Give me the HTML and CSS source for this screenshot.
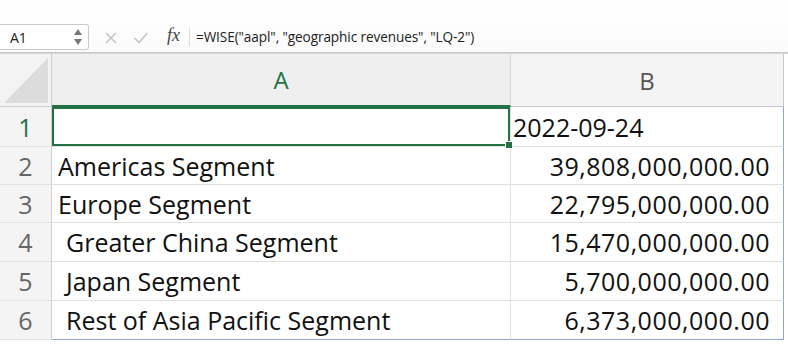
FILE: index.html
```html
<!doctype html>
<html>
	<head>
		<meta charset="utf-8"/>
		<title>Sheet</title>
		<link rel="stylesheet" href="styles.css">
	</head>
	<body>
		<header class="formulaBar">
			<div class="nameBox">
				<span>A1</span>
				<svg class="spin" width="10" height="20" viewBox="0 0 10 20">
					<polygon points="5,2 9,8 1,8" fill="#777"/>
					<polygon points="1,12 9,12 5,18" fill="#777"/>
				</svg>
			</div>
			<svg class="tool" width="14" height="14" viewBox="0 0 14 14">
				<path d="M2 2 L12 12 M12 2 L2 12" stroke="#c4c4c4" stroke-width="1.6" fill="none"/>
			</svg>
			<svg class="tool" width="16" height="14" viewBox="0 0 16 14">
				<path d="M1.5 7 L6 11.5 L14.5 2" stroke="#c4c4c4" stroke-width="1.6" fill="none"/>
			</svg>
			<span class="fx">fx</span>
			<span class="sep"></span>
			<span class="formula">=WISE("aapl", "geographic revenues", "LQ-2")</span>
		</header>
		<div class="rule"></div>

		<main class="sheet">
			<div class="corner">
				<svg width="52" height="53" viewBox="0 0 52 53">
					<polygon points="48,4 48,49 4,49" fill="#dcdcdc"/>
				</svg>
			</div>
			<div class="colHead active">A</div>
			<div class="colHead last">B</div>

			<div class="rowHead active">1</div>
			<div class="cell sel"></div>
			<div class="cell colB">2022-09-24</div>

			<div class="rowHead">2</div>
			<div class="cell">Americas Segment</div>
			<div class="cell colB num">39,808,000,000.00</div>

			<div class="rowHead">3</div>
			<div class="cell">Europe Segment</div>
			<div class="cell colB num">22,795,000,000.00</div>

			<div class="rowHead">4</div>
			<div class="cell indent">Greater China Segment</div>
			<div class="cell colB num">15,470,000,000.00</div>

			<div class="rowHead">5</div>
			<div class="cell indent">Japan Segment</div>
			<div class="cell colB num">5,700,000,000.00</div>

			<div class="rowHead">6</div>
			<div class="cell indent bottom">Rest of Asia Pacific Segment</div>
			<div class="cell colB num bottom">6,373,000,000.00</div>
		</main>
	</body>
</html>
```
FILE: styles.css
```css
html, body {
	width: 788px;
	height: 359px;
	overflow: hidden;
}
body {
	margin: 0;
	background-color: #fff;
	font-family: "Open Sans", "Noto Sans", sans-serif;
}
body * {
	box-sizing: border-box;
}

/* formula bar */
.formulaBar {
	height: 52px;
	padding-top: 24px;
	display: flex;
	align-items: flex-start;
	background: linear-gradient(#fff, #fbfbfb);
}
.nameBox {
	width: 89px;
	height: 26px;
	border: 1px solid #c9c9c9;
	border-left: none;
	border-radius: 0 3px 3px 0;
	background-color: #fff;
	display: flex;
	align-items: center;
	justify-content: space-between;
	padding: 0 5px 0 10px;
	font-size: 14px;
	color: #222;
}
.tool {
	margin-top: 7px;
}
.nameBox + .tool {
	margin-left: 15px;
}
.tool + .tool {
	margin-left: 15px;
}
.fx {
	margin-left: 18px;
	margin-top: 1px;
	font-family: "Liberation Serif", serif;
	font-style: italic;
	font-size: 18px;
	color: #444;
}
.sep {
	width: 1px;
	height: 18px;
	margin: 4px 6px 0 9px;
	background-color: #dedede;
}
.formula {
	margin-top: 3px;
	font-size: 13.6px;
	color: #222;
	letter-spacing: -0.1px;
}
.rule {
	height: 2px;
	border-top: 1px solid #c8c8c8;
	border-bottom: 1px solid #d6d6d6;
}

/* grid */
.sheet {
	display: grid;
	grid-template-columns: 52px 459px 273px;
	grid-template-rows: 53px 40px 38px 38px 39px 39px 39px;
	color: #111;
	font-size: 25px;
}
.corner {
	background-color: #f3f3f3;
	border-right: 1px solid #cfcfcf;
	border-bottom: 1px solid #cfcfcf;
}
.corner svg {
	display: block;
}
.colHead {
	background-color: #f4f4f4;
	border-right: 1px solid #d8d8d8;
	border-bottom: 1px solid #c8c8c8;
	display: flex;
	align-items: center;
	justify-content: center;
	font-size: 24px;
	color: #555;
}
.colHead.active {
	color: #217346;
	background-color: #efefef;
	border-bottom: 2px solid #217346;
}
.colHead.last {
	border-right: 1px solid #c8c8c8;
}
.rowHead {
	background-color: #f4f4f4;
	border-right: 1px solid #cfcfcf;
	border-bottom: 1px solid #e2e2e2;
	display: flex;
	align-items: center;
	justify-content: center;
	color: #666;
}
.rowHead.active {
	color: #217346;
}
.cell {
	border-right: 1px solid #e0e0e0;
	border-bottom: 1px solid #e0e0e0;
	display: flex;
	align-items: center;
	padding: 0 6px;
	white-space: nowrap;
}
.cell.indent {
	padding-left: 14px;
}
.cell.colB {
	padding-left: 2px;
	border-right: 1px solid #8aa6cf;
}
.cell.num {
	justify-content: flex-end;
	padding-right: 13px;
	letter-spacing: 0.5px;
}
.cell.bottom {
	border-bottom: 1px solid #8aa6cf;
}
.cell.sel {
	position: relative;
	box-shadow: inset 0 0 0 2px #217346;
}
.cell.sel::after {
	content: "";
	position: absolute;
	right: -3px;
	bottom: -3px;
	width: 6px;
	height: 6px;
	background-color: #217346;
	border: 1px solid #fff;
}
```
